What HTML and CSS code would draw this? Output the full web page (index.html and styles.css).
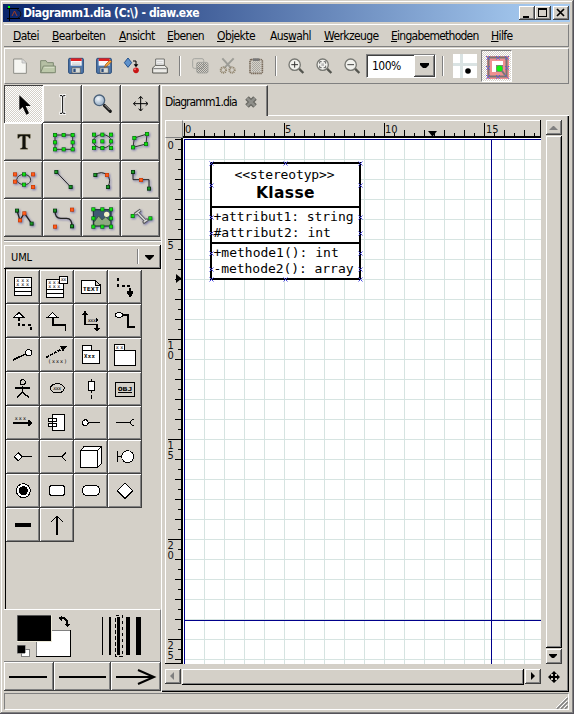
FILE: index.html
```html
<!DOCTYPE html>
<html lang="de">
<head>
<meta charset="utf-8">
<title>Diagramm1.dia</title>
<link rel="stylesheet" href="styles.css">
</head>
<body>
<svg class="defs" width="0" height="0">
  <defs>
    <g id="h"><rect x="-6" y="-6" width="12" height="12" fill="#0b6b12"/><rect x="-4" y="-4" width="8" height="8" fill="#12e012"/></g>
    <g id="d"><rect x="-6" y="-6" width="12" height="12" fill="#0a3a10"/><rect x="-4" y="-4" width="7" height="7" fill="#1c9a28"/></g>
    <g id="o"><rect x="-6" y="-6" width="12" height="12" fill="#c03c08"/><rect x="-4" y="-4" width="8" height="8" fill="#ff5a1c"/></g>
    <path id="x" d="M-2,-2L2,2M2,-2L-2,2" stroke="#4a4ae0" stroke-width="1"/>
    <pattern id="dither" width="6" height="6" patternUnits="userSpaceOnUse"><path d="M0,0h3v3h-3zM3,3h3v3h-3z" fill="#8a8a86"/></pattern>
    <radialGradient id="lens" cx=".4" cy=".35"><stop offset="0" stop-color="#f4f8fc"/><stop offset="1" stop-color="#a8bcd0"/></radialGradient>
  </defs>
</svg>
<div class="window">
  <header class="titlebar">
    <svg class="app" width="18" height="18" viewBox="0 0 18 18"><path d="M4.500,2v15M2,4.500h12M2,14.500h13" stroke="#000" stroke-width="1"/><path d="M12,5.500q4,1 4,4.500q0,3 -3,4" fill="none" stroke="#111"/><path d="M7,12l2.500,-5l2.500,5" fill="none" stroke="#a33c20"/><rect x="3" y="2" width="2" height="2" fill="#0f0"/></svg>
    <h1>Diagramm1.dia (C:\) - diaw.exe</h1>
    <div class="wbtns">
      <b class="wb"><svg width="15" height="14"><path d="M4,10h6v2h-6z"/></svg></b>
      <b class="wb"><svg width="15" height="14"><path d="M3,2h9v9h-9zM4,4v6h7v-6z" fill-rule="evenodd"/></svg></b>
      <b class="wb close"><svg width="15" height="14"><path d="M4,3l7,7M11,3l-7,7" stroke="#000" stroke-width="1.7"/></svg></b>
    </div>
  </header>
  <nav class="menu">
    <span class="m1"><u>D</u>atei</span><span class="m2"><u>B</u>earbeiten</span><span class="m3"><u>A</u>nsicht</span><span class="m4"><u>E</u>benen</span><span class="m5"><u>O</u>bjekte</span><span class="m6">Aus<u>w</u>ahl</span><span class="m7"><u>W</u>erkzeuge</span><span class="m8"><u>E</u>ingabemethoden</span><span class="m9"><u>H</u>ilfe</span>
  </nav>
  <div class="toolbar">
    <svg class="ti" viewBox="18 147 84 102"><path d="M41,177h26l12,12v31h-38z" fill="#f6f6f2" stroke="#8d8d86" stroke-width="3"/><path d="M66,177v12h13" fill="#ddd" stroke="#aaa" stroke-width="2"/></svg>
    <svg class="ti" viewBox="102 147 84 102"><path d="M122,218v-36h16l4,6h18v30z" fill="#b5bfa4" stroke="#7e8a72" stroke-width="3"/><path d="M122,218l8,-20h36v20z" fill="#bcc8aa" stroke="#7e8a72" stroke-width="3"/><path d="M133,202h30" stroke="#e4ead8" stroke-width="2"/></svg>
    <svg class="ti" viewBox="186 147 84 102"><rect x="206" y="175" width="44" height="45" rx="3" fill="#4f78ad" stroke="#234777" stroke-width="3"/><path d="M212,177h33v20h-33z" fill="#f8f8f8"/><path d="M212,175h33v8h-33z" fill="#e02020"/><path d="M216,189h25M216,194h25" stroke="#bbb" stroke-width="2"/><path d="M216,203h25v16h-25z" fill="#d9dcd8" stroke="#555" stroke-width="2"/><path d="M220,206h7v10h-7z" fill="#2c4d7e"/></svg>
    <svg class="ti" viewBox="270 147 84 102"><rect x="290" y="175" width="44" height="45" rx="3" fill="#4f78ad" stroke="#234777" stroke-width="3"/><path d="M296,177h33v20h-33z" fill="#f8f8f8"/><path d="M296,175h33v8h-33z" fill="#e02020"/><path d="M300,203h25v16h-25z" fill="#d9dcd8" stroke="#555" stroke-width="2"/><path d="M304,206h7v10h-7z" fill="#2c4d7e"/><path d="M313,202l4,-9l13,-13l5,5l-13,13z" fill="#f4a53c" stroke="#8c4a14" stroke-width="2"/></svg>
    <svg class="ti" viewBox="354 147 84 102"><path d="M384,174l11,14l-11,14l-11,-14z" fill="#5f92cc" stroke="#22508c" stroke-width="3"/><path d="M399,183h9v12" fill="none" stroke="#000" stroke-width="3"/><path d="M401,193h14l-7,9z"/><circle cx="408" cy="211" r="8.500" fill="#c81414"/><circle cx="405" cy="208" r="3" fill="#f77"/></svg>
    <svg class="ti" viewBox="438 147 84 102"><path d="M467,200v-23h26v23" fill="#f6f6f6" stroke="#70706c" stroke-width="3"/><path d="M471,184h17M471,190h17" stroke="#bbb" stroke-width="2"/><path d="M458,219v-15l8,-8h28l8,8v15z" fill="#ecebe7" stroke="#55554f" stroke-width="3"/><path d="M460,206h40" stroke="#777" stroke-width="3"/></svg>
    <i class="sep"></i>
    <svg class="ti" viewBox="558 147 84 102"><g stroke="#a5a5a0" stroke-width="3" fill="url(#dither)"><rect x="578" y="176" width="33" height="29" rx="5" fill="none"/><rect x="590" y="187" width="34" height="32" rx="5"/></g></svg>
    <svg class="ti" viewBox="642 147 84 102"><path d="M667,175l25,28M701,175l-27,28" stroke="#9d9d97" stroke-width="6"/><circle cx="670" cy="210" r="8" fill="none" stroke="#8d8069" stroke-width="6" stroke-dasharray="3 2"/><circle cx="696" cy="210" r="8" fill="none" stroke="#8d8069" stroke-width="6" stroke-dasharray="3 2"/></svg>
    <svg class="ti" viewBox="726 147 84 102"><rect x="750" y="179" width="37" height="41" rx="4" fill="none" stroke="#77695a" stroke-width="5" stroke-dasharray="4 1.500"/><rect x="755" y="184" width="27" height="33" fill="url(#dither)" opacity=".6"/><rect x="759" y="175" width="19" height="8" fill="#777"/></svg>
    <i class="sep"></i>
    <svg class="ti" viewBox="-6 147 84 102"><path d="M45,206l13,13" stroke="#555650" stroke-width="7"/><circle cx="32" cy="194" r="17" fill="#f1f1ed" stroke="#777873" stroke-width="4"/><path d="M32,184v19M22,194h20" stroke="#333" stroke-width="3"/></svg>
    <svg class="ti" viewBox="78 147 84 102"><path d="M129,206l13,13" stroke="#555650" stroke-width="7"/><circle cx="116" cy="194" r="17" fill="#f1f1ed" stroke="#777873" stroke-width="4"/><path d="M107,191v-6h6M119,185h6v6M125,197v6h-6M113,203h-6v-6" fill="none" stroke="#444" stroke-width="2.500"/><rect x="112" y="190" width="8" height="8" fill="#bbb"/></svg>
    <svg class="ti" viewBox="162 147 84 102"><path d="M213,206l13,13" stroke="#555650" stroke-width="7"/><circle cx="200" cy="194" r="17" fill="#f1f1ed" stroke="#777873" stroke-width="4"/><path d="M190,194h20" stroke="#444" stroke-width="3"/></svg>
    <div class="zoombox"><span class="pct">100%</span><span class="drop"><svg width="21" height="22"><path d="M6,8h9v2l-3,3h-3l-3,-3z"/></svg></span></div>
    <i class="sep s3"></i>
    <svg class="gridico" width="24" height="24"><rect width="24" height="24" fill="#fff"/><path d="M8.500,0v24M0,10.500h24" stroke="#dae3e3" stroke-width="3"/><circle cx="15" cy="17" r="2.800"/></svg>
    <div class="snap"><svg width="24" height="25" viewBox="0 0 24 25"><rect x="1" y="1" width="22" height="23" fill="#f09090"/><rect x="2.500" y="2.500" width="18" height="19" fill="none" stroke="#7b7474" stroke-width="2"/><rect x="6" y="6" width="11" height="11" fill="#fff"/><rect x="10" y="10" width="7" height="7" fill="#8c7c7c"/><path d="M16,16l3,4" stroke="#777" stroke-width="2"/><circle cx="13.500" cy="13.500" r="3" fill="#10f010"/><path d="M0,1l4,4M4,1l-4,4M10,1l4,4M14,1l-4,4M19,1l4,4M23,1l-4,4M0,11l4,4M4,11l-4,4M19,11l4,4M23,11l-4,4M0,20l4,4M4,20l-4,4M10,20l4,4M14,20l-4,4M19,20l4,4" stroke="#5757ee" stroke-width="1" stroke-dasharray="1.400 1"/></svg></div>
  </div>

  <div class="main">
    <aside class="left">
      <div class="tools">
        <div class="tool on"><svg viewBox="12 9 117 114"><path d="M58,40v44l10,-9l11,23l8,-4l-10,-22h15z"/></svg></div>
        <div class="tool"><svg viewBox="129 9 117 114"><path d="M178,41h7l3,3l3,-3h7M188,43v48M178,94h7l3,-3l3,3h7" fill="none" stroke="#fff" stroke-width="9"/><path d="M180,41h6l2,3l2,-3h6M188,43v48M180,94h6l2,-3l2,3h6" fill="none" stroke="#000" stroke-width="3"/></svg></div>
        <div class="tool"><svg viewBox="246 9 117 114"><path d="M313,70l18,18" stroke="#181818" stroke-width="9" stroke-linecap="round"/><path d="M314,69l15,15" stroke="#aaa" stroke-width="3"/><circle cx="298" cy="55" r="16" fill="url(#lens)" stroke="#4b617a" stroke-width="4"/></svg></div>
        <div class="tool"><svg viewBox="363 9 117 114"><path d="M422,45v40M402,65h40M416,50l6,-7l6,7M416,80l6,7l6,-7M407,59l-7,6l7,6M437,59l7,6l-7,6" fill="none" stroke="#000" stroke-width="3"/></svg></div>

        <div class="tool"><svg viewBox="12 123 117 114"><path d="M53,157h38v12h-4q-1,-7 -10,-7v33q0,4 6,4v3h-22v-3q6,0 6,-4v-33q-9,0 -10,7h-4z" fill="#11110c" stroke="#8a7b50" stroke-width="1"/></svg></div>
        <div class="tool"><svg class="sh" viewBox="129 123 117 114"><rect x="165" y="159" width="53" height="43" fill="none" stroke="#333" stroke-width="3"/><use href="#h" x="165" y="159"/><use href="#h" x="191" y="159"/><use href="#h" x="218" y="159"/><use href="#h" x="165" y="181"/><use href="#h" x="218" y="181"/><use href="#h" x="165" y="202"/><use href="#h" x="191" y="202"/><use href="#h" x="218" y="202"/></svg></div>
        <div class="tool"><svg class="sh" viewBox="246 123 117 114"><ellipse cx="307" cy="178" rx="27" ry="20" fill="none" stroke="#333" stroke-width="3"/><use href="#h" x="282" y="158"/><use href="#h" x="307" y="158"/><use href="#h" x="333" y="158"/><use href="#h" x="282" y="178"/><use href="#h" x="307" y="178"/><use href="#h" x="333" y="178"/><use href="#h" x="282" y="198"/><use href="#h" x="307" y="198"/><use href="#h" x="333" y="198"/></svg></div>
        <div class="tool"><svg class="sh" viewBox="363 123 117 114"><path d="M403,168l38,-12l-3,30l-39,10z" fill="none" stroke="#333" stroke-width="3"/><use href="#h" x="403" y="168"/><use href="#h" x="441" y="156"/><use href="#h" x="438" y="186"/><use href="#h" x="399" y="196"/></svg></div>

        <div class="tool"><svg class="sh" viewBox="12 237 117 114"><path d="M72,277q20,2 20,18q-2,13 -20,13q-20,-2 -22,-15q3,-15 22,-16" fill="none" stroke="#333" stroke-width="3"/><use href="#o" x="45" y="277"/><use href="#h" x="72" y="277"/><use href="#o" x="99" y="277"/><use href="#o" x="45" y="299"/><use href="#h" x="72" y="308"/><use href="#o" x="99" y="315"/></svg></div>
        <div class="tool"><svg class="sh" viewBox="129 237 117 114"><path d="M169,270l43,45" stroke="#222" stroke-width="3"/><use href="#d" x="169" y="270"/><use href="#d" x="212" y="315"/></svg></div>
        <div class="tool"><svg class="sh" viewBox="246 237 117 114"><path d="M286,279q18,-14 35,0q14,14 3,35" fill="none" stroke="#222" stroke-width="3"/><use href="#d" x="286" y="279"/><use href="#o" x="321" y="279"/><use href="#d" x="324" y="315"/></svg></div>
        <div class="tool"><svg class="sh" viewBox="363 237 117 114"><path d="M399,270v23h48v27" fill="none" stroke="#222" stroke-width="3"/><use href="#d" x="399" y="270"/><use href="#o" x="423" y="294"/><use href="#d" x="447" y="320"/></svg></div>

        <div class="tool"><svg class="sh" viewBox="12 351 117 114"><path d="M51,386l9,29l13,-22l22,32" fill="none" stroke="#222" stroke-width="4"/><use href="#d" x="51" y="386"/><use href="#o" x="60" y="415"/><use href="#o" x="73" y="394"/><use href="#d" x="95" y="425"/></svg></div>
        <div class="tool"><svg class="sh" viewBox="129 351 117 114"><path d="M165,386q0,23 17,23h18q16,0 16,24" fill="none" stroke="#222" stroke-width="4"/><use href="#d" x="165" y="386"/><use href="#o" x="216" y="383"/><use href="#o" x="165" y="434"/><use href="#d" x="216" y="433"/></svg></div>
        <div class="tool"><svg class="sh" viewBox="246 351 117 114"><rect x="280" y="383" width="53" height="49" fill="#3f5a72" stroke="#172a33" stroke-width="3"/><path d="M282,421l14,-19l10,12l11,-9l15,14v12h-50z" fill="#8fa982" stroke="#334a33" stroke-width="2"/><circle cx="320" cy="397" r="8" fill="#f6f3c8"/><use href="#h" x="280" y="382"/><use href="#h" x="307" y="382"/><use href="#h" x="333" y="382"/><use href="#h" x="280" y="409"/><use href="#h" x="333" y="409"/><use href="#h" x="280" y="434"/><use href="#h" x="307" y="434"/><use href="#h" x="333" y="434"/></svg></div>
        <div class="tool"><svg class="sh" viewBox="363 351 117 114"><path d="M413,392l24,25M404,397l18,-13M429,423l15,-11" stroke="#555" stroke-width="9"/><path d="M413,392l24,25M406,396l15,-11M431,421l11,-8" stroke="#dedede" stroke-width="4"/><use href="#h" x="398" y="402"/><use href="#h" x="451" y="409"/></svg></div>
      </div>
      <div class="hr"></div>
      <div class="combo"><span>UML</span><svg width="24" height="22"><path d="M.5,3v15" stroke="#808080"/><path d="M1.500,3v15" stroke="#fff"/><path d="M8,9h9v1l-4,4h-1l-4,-4z"/></svg></div>
      <div class="palette">
        <div class="p"><svg viewBox="18 96 102 102"><path d="M43.500,118.500h51v54h-51zM43,148.500h52M43,160.500h52" fill="#fff" stroke="#000" stroke-width="3"/><text x="49" y="132" class="t" textLength="38">xxx</text><text x="49" y="144" class="t" textLength="38">xxx</text></svg></div>
        <div class="p"><svg viewBox="120 96 102 102"><path d="M139.500,124.500h51v54h-51zM139,154.500h52M139,166.500h52" fill="#fff" stroke="#000" stroke-width="3"/><text x="145" y="138" class="t" textLength="36">xxx</text><text x="145" y="150" class="t" textLength="36">xxx</text><path d="M178.500,115.500h24v21h-24z" fill="#fff" stroke="#000" stroke-width="3"/><text x="182" y="130" class="t" textLength="17">xx</text></svg></div>
        <div class="p"><svg viewBox="222 96 102 102"><path d="M244.500,127.500h42l15,14v26h-57zM286.500,127.500v14h15" fill="#fff" stroke="#000" stroke-width="3"/><text x="248" y="160" class="t l" textLength="49" lengthAdjust="spacingAndGlyphs">TEXT</text></svg></div>
        <div class="p"><svg viewBox="324 96 102 102"><path d="M355,121v22h36v24" fill="none" stroke="#000" stroke-width="6" stroke-dasharray="9 7"/><path d="M381,160h18v6l-7,11h-3l-8,-11z"/></svg></div>

        <div class="p"><svg viewBox="18 198 102 102"><path d="M57,239v22h36v18" fill="none" stroke="#000" stroke-width="5" stroke-dasharray="9 7"/><path d="M57,224l15,14h-31z" fill="#fff" stroke="#000" stroke-width="3"/></svg></div>
        <div class="p"><svg viewBox="120 198 102 102"><path d="M158,239v22h38v17" fill="none" stroke="#000" stroke-width="5"/><path d="M158,224l15,14h-31z" fill="#fff" stroke="#000" stroke-width="3"/></svg></div>
        <div class="p"><svg viewBox="222 198 102 102"><path d="M255,223v36h36v18" fill="none" stroke="#000" stroke-width="5"/><path d="M246,230l9,-12l9,12zM282,270h18l-9,10zM289,241v12l7,-6z"/><text x="263" y="252" class="t" textLength="25">xxx</text></svg></div>
        <div class="p"><svg viewBox="324 198 102 102"><path d="M368,231h16v36h21" fill="none" stroke="#000" stroke-width="6"/><ellipse cx="357" cy="231" rx="11" ry="7" fill="#fff" stroke="#000" stroke-width="3"/></svg></div>

        <div class="p"><svg viewBox="18 300 102 102"><path d="M39,366l38,-18" stroke="#000" stroke-width="5"/><circle cx="86" cy="344" r="9" fill="#fff" stroke="#000" stroke-width="3"/></svg></div>
        <div class="p"><svg viewBox="120 300 102 102"><path d="M139,358l48,-26" stroke="#000" stroke-width="5" stroke-dasharray="9 4"/><path d="M180,325l21,-1l-12,16z"/><text x="144" y="376" class="t" textLength="57">(xxx)</text></svg></div>
        <div class="p"><svg viewBox="222 300 102 102"><path d="M247.500,337.500h51v39h-51zM247.500,322.500h27v15h-27z" fill="#fff" stroke="#000" stroke-width="3"/><text x="252" y="359" class="t l" textLength="33">Xxx</text></svg></div>
        <div class="p"><svg viewBox="324 300 102 102"><path d="M343.500,337.500h63v45h-63zM343.500,319.500h30v18h-30z" fill="#fff" stroke="#000" stroke-width="3"/><text x="347" y="333" class="t" textLength="23">xx</text></svg></div>

        <div class="p"><svg viewBox="18 402 102 102"><path d="M46,450h43M68,444v20M52,480v-3l16,-14l17,14v3" fill="none" stroke="#000" stroke-width="4"/><circle cx="68" cy="433" r="8" fill="none" stroke="#000" stroke-width="3"/></svg></div>
        <div class="p"><svg viewBox="120 402 102 102"><ellipse cx="172" cy="451" rx="21" ry="14" fill="none" stroke="#000" stroke-width="3"/><text x="160" y="456" class="t i" textLength="24">xxx</text></svg></div>
        <div class="p"><svg viewBox="222 402 102 102"><path d="M274,423v7M274,456v10M274,472v10" stroke="#000" stroke-width="3"/><path d="M265.500,430.500h18v26h-18z" fill="#fff" stroke="#000" stroke-width="3"/></svg></div>
        <div class="p"><svg viewBox="324 402 102 102"><path d="M346.500,433.500h57v42h-57z" fill="none" stroke="#000" stroke-width="3"/><text x="353" y="459" class="t l" textLength="44" lengthAdjust="spacingAndGlyphs">OBJ</text><path d="M353,463.500h44" stroke="#000" stroke-width="3"/></svg></div>

        <div class="p"><svg viewBox="18 18 102 102"><text x="44" y="61" class="t" textLength="34">xxx</text><path d="M39,69h50" stroke="#000" stroke-width="6"/><path d="M85,59h3l9,10l-9,9h-3z"/></svg></div>
        <div class="p"><svg viewBox="120 18 102 102"><path d="M157.500,43.500h36v48h-36zM145.500,55.500h24v9h-24zM145.500,71.500h24v9h-24z" fill="#fff" stroke="#000" stroke-width="3"/></svg></div>
        <div class="p"><svg viewBox="222 18 102 102"><path d="M265,67.500h35" stroke="#000" stroke-width="3"/><circle cx="256" cy="68" r="8.500" fill="#fff" stroke="#000" stroke-width="3"/></svg></div>
        <div class="p"><svg viewBox="324 18 102 102"><path d="M348,67.500h42M402,58q-10,1 -11,10q1,8 11,9" fill="none" stroke="#000" stroke-width="3"/></svg></div>

        <div class="p"><svg viewBox="18 120 102 102"><path d="M67,169.500h29" stroke="#000" stroke-width="3"/><path d="M55,158l12,12l-12,12l-12,-12z" fill="#fff" stroke="#000" stroke-width="3"/></svg></div>
        <div class="p"><svg viewBox="120 120 102 102"><path d="M144,169.500h42M198,157l-13,13l13,13" fill="none" stroke="#000" stroke-width="3"/></svg></div>
        <div class="p"><svg viewBox="222 120 102 102"><path d="M241.500,151.500l11,-12h52v51l-12,12h-51zM241.500,151.500h51v51M292.500,151.500l12,-12" fill="#fff" stroke="#000" stroke-width="3"/></svg></div>
        <div class="p"><svg viewBox="324 120 102 102"><path d="M352.500,154v32M353,169.500h12" stroke="#000" stroke-width="3"/><circle cx="383" cy="170" r="18" fill="#fff" stroke="#000" stroke-width="3"/></svg></div>

        <div class="p"><svg viewBox="18 222 102 102"><circle cx="70" cy="272" r="21" fill="#fff" stroke="#000" stroke-width="3"/><circle cx="70" cy="272" r="13.500"/></svg></div>
        <div class="p"><svg viewBox="120 222 102 102"><rect x="148.500" y="256.500" width="45" height="30" rx="8" fill="#fff" stroke="#000" stroke-width="3"/></svg></div>
        <div class="p"><svg viewBox="222 222 102 102"><rect x="247.500" y="256.500" width="51" height="30" rx="13" fill="#fff" stroke="#000" stroke-width="3"/></svg></div>
        <div class="p"><svg viewBox="324 222 102 102"><path d="M375,249l23,23l-23,24l-23,-24z" fill="#fff" stroke="#000" stroke-width="3"/></svg></div>

        <div class="p"><svg viewBox="18 324 102 102"><path d="M45,369h48v12h-48z"/></svg></div>
        <div class="p"><svg viewBox="120 324 102 102"><path d="M171,349v56" stroke="#000" stroke-width="5"/><path d="M154,365l17,-17l17,17" fill="none" stroke="#000" stroke-width="3"/></svg></div>
      </div>
      <div class="styles">
        <svg width="156" height="51" viewBox="12 30 468 153">
          <path d="M108,90h105v81h-105z"/><path d="M108,90h103v79h-103z" fill="#808080"/><path d="M111,93h99v75h-99z" fill="#fff"/>
          <path d="M51,45h105v80h-105z" fill="#ece9d8"/><path d="M51,45h102v78h-102z" fill="#000"/><path d="M51,45h102M52,45v78" stroke="#808080" stroke-width="2"/>
          <path d="M64,147h23v23h-23z" fill="#fff" stroke="#808080" stroke-width="3"/><path d="M51,135h24v24h-24z" stroke="#808080" stroke-width="2"/>
          <path d="M186,54q16,-1 16,20" fill="none" stroke="#000" stroke-width="6"/><path d="M175,55l12,-10v19zM192,71h21l-10,11z"/>
          <path d="M306,51h3v114h-3zM327,51h6v114h-6zM351,51h9v114h-9zM378,51h12v114h-12zM408,51h15v114h-15z"/>
          <path d="M346.500,46.500h21v123h-21z" fill="none" stroke="#000" stroke-width="3" stroke-dasharray="10 8"/>
        </svg>
      </div>
      <div class="lines">
        <div class="ln w1"><svg width="49" height="29"><path d="M5,14h38v2h-38z"/></svg></div>
        <div class="ln w2"><svg width="57" height="29"><path d="M5,14h47v2h-47z"/></svg></div>
        <div class="ln w3"><svg width="50" height="29"><path d="M5,15h38M27,8l16,7l-16,7" fill="none" stroke="#000" stroke-width="2"/></svg></div>
      </div>
    </aside>

    <section class="doc">
      <div class="tabs"><div class="tab"><span>Diagramm1.dia</span><svg width="14" height="14"><path d="M3,3l8,8M11,3l-8,8" stroke="#64645f" stroke-width="5"/><path d="M3,3l8,8M11,3l-8,8" stroke="#8f8f8a" stroke-width="2.500"/></svg></div><div class="rest"></div></div>
      <div class="page">
        <div class="corner"></div>
        <svg class="rtop" width="358" height="18" viewBox="183 120 358 18">
          <defs><pattern id="tt" x="184" y="120" width="20" height="18" patternUnits="userSpaceOnUse"><path d="M0,10h1v6h-1zM10,13h1v3h-1z"/></pattern></defs>
          <rect x="183" y="120" width="358" height="18" fill="#d4d0c8"/><path d="M183,120h358v1h-358z" fill="#fff"/>
          <rect x="184" y="120" width="356" height="18" fill="url(#tt)"/>
          <path d="M184,123h1v13h-1zM284,123h1v13h-1zM384,123h1v13h-1zM484,123h1v13h-1zM183,136h358v2h-358zM540,120h1v18h-1z"/>
          <text x="185" y="133">0</text><text x="285" y="133">5</text><text x="385" y="133">10</text><text x="486" y="133">15</text><path d="M428,131h9l-4,5h-1z"/>
        </svg>
        <svg class="rleft" width="18" height="526" viewBox="165 138 18 526">
          <defs><pattern id="tl" x="165" y="139" width="18" height="20" patternUnits="userSpaceOnUse"><path d="M10,0h6v1h-6zM13,10h3v1h-3z"/></pattern></defs>
          <rect x="165" y="138" width="18" height="526" fill="#d4d0c8"/><path d="M165,138h1v526h-1z" fill="#fff"/>
          <rect x="165" y="139" width="18" height="524" fill="url(#tl)"/>
          <path d="M168,239h13v1h-13zM168,339h13v1h-13zM168,439h13v1h-13zM168,539h13v1h-13zM168,639h13v1h-13zM181,138h2v526h-2zM165,663h18v1h-18zM176,274l5,4v1l-5,4z"/>
          <text x="167.500" y="149">0</text><text x="167.500" y="249">5</text><text x="167.500" y="349">1</text><text x="167.500" y="359">0</text><text x="167.500" y="449">1</text><text x="167.500" y="459">5</text><text x="167.500" y="549">2</text><text x="167.500" y="559">0</text><text x="167.500" y="649">2</text><text x="167.500" y="659">5</text>
        </svg>
        <svg class="canvas" width="358" height="526" viewBox="183 138 358 526">
          <defs><pattern id="g" x="184" y="139" width="20" height="20" patternUnits="userSpaceOnUse"><path d="M0,0h20v1h-19v19h-1z" fill="#d6e4e1"/></pattern></defs>
          <rect x="183" y="138" width="358" height="526" fill="#fff"/><rect x="184" y="139" width="357" height="525" fill="url(#g)"/>
          <path d="M184,139h357v1h-357zM184,139h1v525h-1zM184,620h357v1h-357zM491,139h1v525h-1z" fill="#00008b"/>
          <path d="M211,163h149v116h-149zM211,207h149M211,243h149" fill="#fff" stroke="#000" stroke-width="2"/>
          <g class="uml"><text x="234.500" y="179" textLength="100">&lt;&lt;stereotyp&gt;&gt;</text><text x="256" y="198" class="name" textLength="58.500">Klasse</text><text x="213.500" y="221" textLength="140">+attribut1: string</text><text x="213.500" y="237">#attribut2: int</text><text x="213.500" y="257">+methode1(): int</text><text x="213.500" y="273" textLength="140">-methode2(): array</text></g>
          <use href="#x" x="211.500" y="163.500"/><use href="#x" x="285.500" y="163.500"/><use href="#x" x="360.500" y="163.500"/><use href="#x" x="211.500" y="185.500"/><use href="#x" x="360.500" y="185.500"/><use href="#x" x="211.500" y="217.500"/><use href="#x" x="360.500" y="217.500"/><use href="#x" x="211.500" y="233.500"/><use href="#x" x="360.500" y="233.500"/><use href="#x" x="211.500" y="253.500"/><use href="#x" x="360.500" y="253.500"/><use href="#x" x="211.500" y="269.500"/><use href="#x" x="360.500" y="269.500"/><use href="#x" x="211.500" y="279.500"/><use href="#x" x="285.500" y="279.500"/><use href="#x" x="360.500" y="279.500"/>
        </svg>
        <div class="vs"><b class="sb"><svg width="15" height="14"><path d="M3,10h9l-4,-4h-1z" fill="#808080"/></svg></b><b class="thumb"></b><b class="sb"><svg width="15" height="14"><path d="M3,5h8v1l-3,3h-2l-3,-3z"/></svg></b></div>
        <div class="hs"><b class="sb"><svg width="15" height="14"><path d="M9,3v8l-4,-4z" fill="#808080"/></svg></b><b class="thumb"></b><b class="sb"><svg width="15" height="14"><path d="M6,3l4,4l-4,4z"/></svg></b></div>
        <svg class="navi" width="12" height="12"><path d="M6,2v8M2,6h8" stroke="#000" stroke-width="2"/><path d="M3,3h6l-3,-3zM3,9h6l-3,3zM3,3v6l-3,-3zM9,3v6l3,-3z"/></svg>
      </div>
    </section>
  </div>
  <footer class="status"><svg width="12" height="12"><path d="M1,12l11,-11M5,12l7,-7M9,12l3,-3" stroke="#808080" stroke-width="1.500"/><path d="M0,11l11,-11M4,11l7,-7M8,11l3,-3" stroke="#fff"/></svg></footer>
</div>
</body>
</html>
```
FILE: styles.css
```css
* { box-sizing: border-box; }
body { margin: 0; background: #d4d0c8; color: #000; font: 11px "DejaVu Sans Condensed", "DejaVu Sans", sans-serif; font-stretch: condensed; }
svg { display: block; flex: none; }
.defs { position: absolute; }
.window { width: 574px; height: 714px; padding: 4px; display: flex; flex-direction: column; background: #d4d0c8; box-shadow: inset -1px -1px #55535a, inset 1px 1px #d4d0c8, inset -2px -2px #808080, inset 2px 2px #fff; overflow: hidden; }

.titlebar { height: 18px; width: 567px; margin-left: -1px; flex: none; display: flex; align-items: center; background: linear-gradient(90deg, #0a246a, #a6caf0 95%); }
.app { margin-left: 2px; }
.titlebar h1 { margin: 0; font: bold 12px "DejaVu Sans Condensed", "DejaVu Sans", sans-serif; font-stretch: condensed; color: #fff; flex: 1; white-space: nowrap; letter-spacing: -.41px; }
.wbtns { display: flex; margin-right: 1px; }
.wb { width: 16px; height: 14px; background: #d4d0c8; box-shadow: inset -1px -1px #404040, inset 1px 1px #fff, inset -2px -2px #808080; }
.wb.close { margin-left: 2px; }

.menu { height: 23px; width: 565px; margin-top: 2px; flex: none; display: flex; line-height: 23px; padding-left: 9px; font-size: 12px; letter-spacing: -.6px; white-space: nowrap; border-top: 1px solid #fff; border-bottom: 1px solid #808080; border-right: 1px solid #808080; }
.menu u { text-underline-offset: 1px; }
.m1 { width: 39px; } .m2 { width: 67px; } .m3 { width: 48px; } .m4 { width: 50px; } .m5 { width: 53px; } .m6 { width: 54px; } .m7 { width: 67px; } .m8 { width: 100px; letter-spacing: -.75px; }

.toolbar { height: 36px; width: 565px; margin-top: 1px; flex: none; display: flex; align-items: center; padding-left: 1px; border: 1px solid #fff; border-right-color: #808080; border-bottom-color: #808080; }
.ti { width: 28px; height: 34px; }
.sep { width: 12px; height: 20px; flex: none; background: linear-gradient(90deg, transparent 5px, #808080 5px 6px, #fff 6px 7px, transparent 7px); }
.s3 { width: 17px; background: linear-gradient(90deg, transparent 6px, #808080 6px 7px, #fff 7px 8px, transparent 8px); }
.zoombox { width: 70px; height: 24px; display: flex; background: #fff; border: 1px solid #808080; box-shadow: inset 1px 1px #404040; border-right-color: #fff; border-bottom-color: #fff; }
.pct { width: 47px; padding-left: 5px; line-height: 23px; font-size: 12px; letter-spacing: -.5px; }
.drop { width: 21px; height: 22px; background: #d4d0c8; box-shadow: inset -1px -1px #404040, inset 1px 1px #fff, inset -2px -2px #808080; }
.gridico { margin-right: 4px; }
.snap { width: 31px; height: 32px; padding: 4px 0 0 4px; background: repeating-conic-gradient(#fff 0 25%, #d4d0c8 0 50%) 0 0 / 2px 2px; border: 1px solid #808080; border-right-color: #fff; border-bottom-color: #fff; }

.main { display: flex; height: 607px; margin-top: 1px; flex: none; }
.left { width: 157px; flex: none; }
.tools { display: grid; grid-template-columns: repeat(4, 39px); grid-auto-rows: 38px; }
.tool, .p, .ln { box-shadow: inset -1px -1px #404040, inset 1px 1px #fff, inset -2px -2px #808080; }
.tool svg { width: 39px; height: 38px; }
.tool.on { background: repeating-conic-gradient(#fff 0 25%, #d4d0c8 0 50%) 0 0 / 2px 2px; box-shadow: inset 1px 1px #404040, inset -1px -1px #fff; }
.sh { filter: drop-shadow(1px 1px 1px rgba(60, 60, 150, .65)); }
.hr { height: 2px; margin: 3px 0; border-top: 1px solid #808080; border-bottom: 1px solid #fff; }
.combo { width: 157px; height: 24px; display: flex; justify-content: space-between; align-items: center; padding-left: 7px; box-shadow: inset -1px -1px #000, inset 1px 1px #fff, inset -2px -2px #808080; letter-spacing: -.1px; }
.palette { height: 341px; margin: -1px 0 0 1px; padding-top: 1px; border-left: 1px solid #000; border-top: 1px solid #000; display: grid; grid-template-columns: repeat(4, 34px); grid-auto-rows: 34px; align-content: start; }
.p svg { width: 34px; height: 34px; shape-rendering: crispEdges; }
.t { font: 15px "DejaVu Sans Mono", monospace; }
.t.l { font-size: 17px; font-weight: bold; }
.t.i { font-style: italic; }
.styles { height: 52px; border-top: 1px solid #fff; border-right: 1px solid #808080; }
.styles svg { shape-rendering: crispEdges; }
.lines { display: flex; height: 30px; border-top: 1px solid #808080; }
.w1 { width: 50px; } .w2 { width: 57px; } .w3 { width: 50px; }

.doc { width: 408px; display: flex; flex-direction: column; }
.tabs { display: flex; height: 31px; flex: none; }
.tab { width: 107px; display: flex; align-items: center; justify-content: space-between; padding: 1px 9px 0 3px; border-left: 1px solid #fff; border-top: 1px solid #fff; border-right: 1px solid #404040; box-shadow: inset -1px 0 #808080; font-size: 12px; letter-spacing: -.92px; white-space: nowrap; }
.page { height: 576px; display: grid; grid-template-columns: 18px 358px 28px; grid-template-rows: 18px 526px 28px; padding: 4px 0 0 3px; border-left: 1px solid #fff; box-shadow: inset -1px -1px #000, inset -2px -2px #808080; }
.rest { flex: 1; border-bottom: 1px solid #fff; }
.corner { border: 1px solid #fff; border-right-color: #808080; border-bottom-color: #808080; }
.rtop { grid-column: 2; grid-row: 1; }
.rleft { grid-column: 1; grid-row: 2; }
.canvas { grid-column: 2; grid-row: 2; }
.rtop text, .rleft text { font: 11px "DejaVu Sans Condensed", sans-serif; font-stretch: condensed; fill: #111; }
.uml { font: 13px "DejaVu Sans Mono", monospace; }
.name { font: bold 15.500px "DejaVu Sans", sans-serif; }
.vs { grid-column: 3; grid-row: 1 / 3; width: 16px; margin-left: 5px; display: flex; flex-direction: column; gap: 1px; }
.hs { grid-column: 1 / 3; grid-row: 3; height: 16px; margin-top: 5px; display: flex; gap: 1px; }
.sb { width: 16px; height: 15px; flex: none; box-shadow: inset -1px -1px #404040, inset 1px 1px #fff, inset -2px -2px #808080; }
.thumb { flex: 1; box-shadow: inset -1px -1px #000, inset 1px 1px #fff, inset -2px -2px #808080; }
.navi { grid-column: 3; grid-row: 3; margin: 7px 0 0 7px; }
.status { height: 17px; width: 565px; margin-top: 1px; flex: none; display: flex; justify-content: flex-end; align-items: flex-end; border: 1px solid #fff; border-top-color: #808080; border-left-color: #808080; }
```
